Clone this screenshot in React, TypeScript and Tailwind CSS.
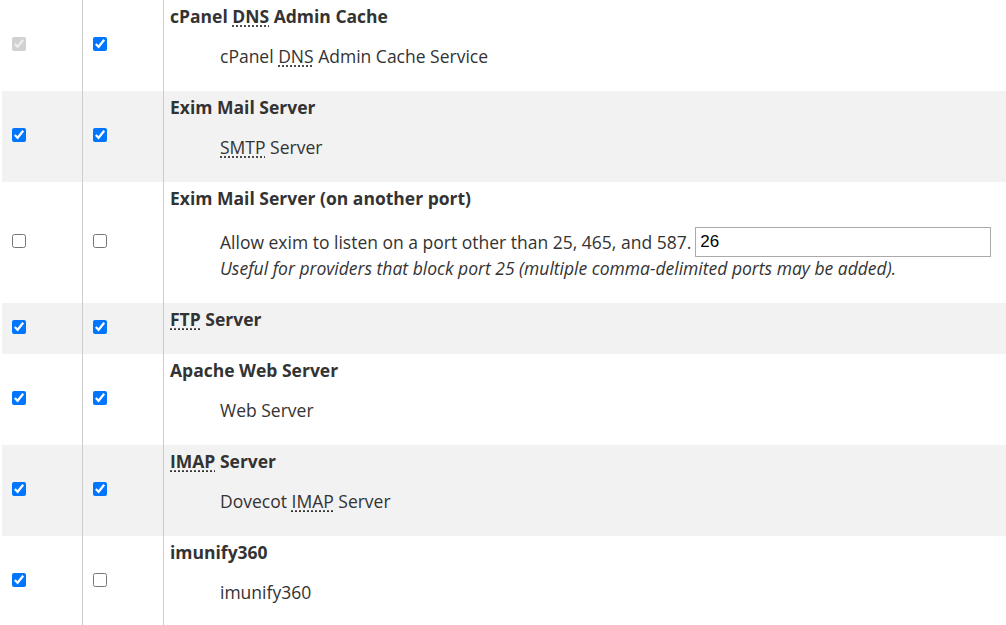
import React from "react";

type Row = {
  a: boolean;
  aDisabled?: boolean;
  b: boolean;
  title: React.ReactNode;
  desc?: React.ReactNode;
  gray: boolean;
  extra?: boolean;
};

const Abbr = ({ children }: { children: React.ReactNode }) => (
  <abbr className="no-underline [text-decoration:underline_dotted] [text-underline-offset:3px] decoration-1 cursor-help">
    {children}
  </abbr>
);

const rows: Row[] = [
  {
    a: true,
    aDisabled: true,
    b: true,
    gray: false,
    title: (
      <>
        cPanel <Abbr>DNS</Abbr> Admin Cache
      </>
    ),
    desc: (
      <>
        cPanel <Abbr>DNS</Abbr> Admin Cache Service
      </>
    ),
  },
  {
    a: true,
    b: true,
    gray: true,
    title: <>Exim Mail Server</>,
    desc: (
      <>
        <Abbr>SMTP</Abbr> Server
      </>
    ),
  },
  {
    a: false,
    b: false,
    gray: false,
    extra: true,
    title: <>Exim Mail Server (on another port)</>,
  },
  {
    a: true,
    b: true,
    gray: true,
    title: (
      <>
        <Abbr>FTP</Abbr> Server
      </>
    ),
  },
  {
    a: true,
    b: true,
    gray: false,
    title: <>Apache Web Server</>,
    desc: <>Web Server</>,
  },
  {
    a: true,
    b: true,
    gray: true,
    title: (
      <>
        <Abbr>IMAP</Abbr> Server
      </>
    ),
    desc: (
      <>
        Dovecot <Abbr>IMAP</Abbr> Server
      </>
    ),
  },
  {
    a: true,
    b: false,
    gray: false,
    title: <>imunify360</>,
    desc: <>imunify360</>,
  },
];

export default function App() {
  return (
    <div
      className="w-[1006px] h-[625px] overflow-hidden bg-white text-[#333] text-[17.5px] leading-[22px]"
      style={{ fontFamily: '"Open Sans", "Noto Sans", sans-serif' }}
    >
      <div className="ml-[2px] flex flex-col">
        {rows.map((r, i) => (
          <div
            key={i}
            className={`flex ${r.gray ? "bg-[#f2f2f2]" : "bg-white"} ${
              i === 0 ? "h-[91px]" : ""
            }`}
          >
            <div className="w-[81px] shrink-0 border-r border-[#cccccc] flex items-center pl-[6px] pb-[3px]">
              <input
                type="checkbox"
                defaultChecked={r.a}
                disabled={r.aDisabled}
                className="m-0 ml-[4px] w-[14px] h-[14px]"
              />
            </div>
            <div className="w-[81px] shrink-0 border-r border-[#cccccc] flex items-center pl-[6px] pb-[3px]">
              <input
                type="checkbox"
                defaultChecked={r.b}
                className="m-0 ml-[4px] w-[14px] h-[14px]"
              />
            </div>
            <div className="flex-1 pl-[6px] pt-[5px] pb-[5px]">
              <div className="font-bold">{r.title}</div>
              {r.desc && <div className="ml-[50px] mt-[18px] mb-[19px]">{r.desc}</div>}
              {r.extra && (
                <div className="ml-[50px] mt-[18px] mb-[19px]">
                  <div className="flex items-center h-[30px]">
                    <span>Allow exim to listen on a port other than 25, 465, and 587.</span>
                    <input
                      type="text"
                      defaultValue="26"
                      className="ml-[4px] w-[296px] h-[30px] border border-[#aaaaaa] px-[4px] text-[17px] text-black outline-none"
                      style={{ fontFamily: '"Liberation Sans", Arial, sans-serif' }}
                    />
                  </div>
                  <div className="italic">
                    Useful for providers that block port 25 (multiple comma-delimited ports may be added).
                  </div>
                </div>
              )}
              {!r.desc && !r.extra && <div className="h-[19px]" />}
            </div>
          </div>
        ))}
      </div>
    </div>
  );
}
